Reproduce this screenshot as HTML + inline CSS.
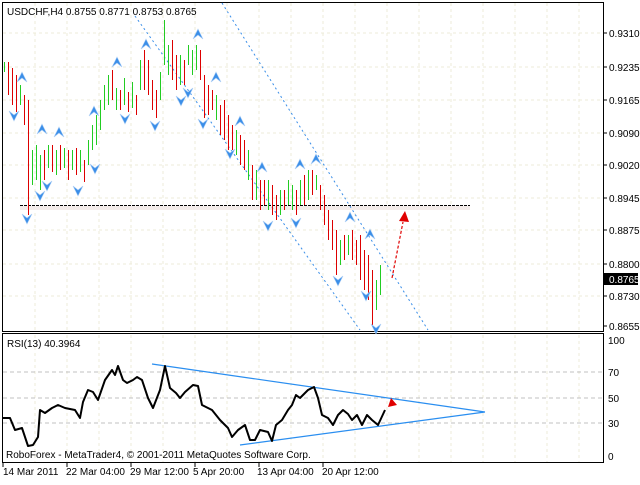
<!DOCTYPE html>
<html><head><meta charset="utf-8"><style>
html,body{margin:0;padding:0;background:#fff;}
svg text{font-family:"Liberation Sans",sans-serif;font-size:10px;fill:#000;}
</style></head><body>
<svg width="640" height="480" viewBox="0 0 640 480" xmlns="http://www.w3.org/2000/svg">
<rect width="640" height="480" fill="#fff"/>
<g stroke="#ecebd8" stroke-width="1" stroke-dasharray="3,3" shape-rendering="crispEdges">
<path d="M35 3V330M67 3V330M99 3V330M131 3V330M163 3V330M195 3V330M227 3V330M259 3V330M291 3V330M323 3V330M355 3V330M387 3V330M419 3V330M451 3V330M483 3V330M515 3V330M547 3V330M579 3V330"/>
<path d="M3 33H603M3 67H603M3 100H603M3 133H603M3 165H603M3 198H603M3 230H603M3 264H603M3 296H603"/>
<path d="M35 335V462M67 335V462M99 335V462M131 335V462M163 335V462M195 335V462M227 335V462M259 335V462M291 335V462M323 335V462M355 335V462M387 335V462M419 335V462M451 335V462M483 335V462M515 335V462M547 335V462M579 335V462"/>
</g>
<g stroke="#c0c0c0" stroke-dasharray="4,3" shape-rendering="crispEdges"><path d="M3 372H603M3 398H603M3 423H603"/></g>
<rect x="2.5" y="2.5" width="601" height="329" fill="none" stroke="#000" shape-rendering="crispEdges"/>
<rect x="2.5" y="333.5" width="601" height="129" fill="none" stroke="#000" shape-rendering="crispEdges"/>
<rect x="20" y="206" width="450" height="4" fill="#f3ecea"/>
<path d="M20 205.5H470" stroke="#000" stroke-dasharray="3,1" shape-rendering="crispEdges"/>
<g stroke="#3a8ee8" stroke-dasharray="2,3" fill="none"><path d="M222 3L428 330M135 16L360 330"/></g>
<g stroke-width="1" transform="translate(0.5 0)">
<g stroke="#dd0000">
<path d="M8 62V95M12 68V105M16 75V112M24 95V125M28 100V215M44 150V180M52 145V172M60 145V170M68 150V180M76 148V175M84 160V182M112 70V100M120 90V110M128 92V112M136 95V115M144 50V90M148 60V95M152 80V110M156 90V118M172 40V80M176 55V90M184 60V85M200 50V80M204 75V118M208 85V115M212 90V110M220 105V135M224 100V140M228 115V150M232 125V150M240 135V165M244 140V170M252 165V200M260 180V210M264 180V205M272 185V215M276 195V220M284 190V210M296 190V215M304 175V205M312 170V195M320 185V210M324 195V225M328 210V240M332 220V250M336 230V275M344 235V260M352 230V260M356 240V265M360 235V280M364 250V290M368 255V300M372 270V325"/>
</g>
<g stroke="#22cc22">
<path d="M4 62V72M20 85V105M32 150V185M36 145V180M40 155V190M48 145V168M56 150V175M64 148V168M72 150V170M80 150V172M88 140V165M92 125V150M96 115V145M100 100V130M104 85V110M108 75V105M116 88V110M124 78V105M132 82V108M140 60V90M160 72V100M164 20V65M168 45V75M180 55V85M188 45V65M192 50V75M196 45V70M216 95V120M236 130V155M248 150V180M256 170V200M268 180V210M280 190V215M288 180V205M292 185V210M300 180V205M308 170V200M316 175V190M340 240V265M348 235V255M376 280V310M380 265V295"/>
</g>
</g>
<g fill="#3a8ee8" stroke="#a8ccf5" stroke-width="0.6">
<path d="M22 78l-5 4 5-10 5 10z"/>
<path d="M42 130l-5 4 5-10 5 10z"/><path d="M59 133l-5 4 5-10 5 10z"/>
<path d="M94 112l-5 4 5-10 5 10z"/><path d="M117 63l-5 4 5-10 5 10z"/>
<path d="M146 45l-5 4 5-10 5 10z"/><path d="M198 35l-5 4 5-10 5 10z"/>
<path d="M216 78l-5 4 5-10 5 10z"/><path d="M240 122l-5 4 5-10 5 10z"/>
<path d="M262 168l-5 4 5-10 5 10z"/><path d="M300 165l-5 4 5-10 5 10z"/>
<path d="M316 160l-5 4 5-10 5 10z"/><path d="M350 218l-5 4 5-10 5 10z"/>
<path d="M370 235l-5 4 5-10 5 10z"/>
<path d="M14 115l5-4-5 10-5-10z"/><path d="M27 218l5-4-5 10-5-10z"/>
<path d="M40 195l5-4-5 10-5-10z"/><path d="M47 185l5-4-5 10-5-10z"/>
<path d="M78 190l5-4-5 10-5-10z"/><path d="M95 168l5-4-5 10-5-10z"/>
<path d="M125 118l5-4-5 10-5-10z"/><path d="M155 125l5-4-5 10-5-10z"/>
<path d="M181 100l5-4-5 10-5-10z"/><path d="M188 92l5-4-5 10-5-10z"/>
<path d="M203 123l5-4-5 10-5-10z"/><path d="M230 153l5-4-5 10-5-10z"/>
<path d="M268 225l5-4-5 10-5-10z"/><path d="M296 222l5-4-5 10-5-10z"/>
<path d="M338 280l5-4-5 10-5-10z"/><path d="M366 295l5-4-5 10-5-10z"/>
<path d="M376 328l5-4-5 10-5-10z"/>
</g>
<path d="M392 278L403 222" stroke="#e00000" stroke-width="1.2" stroke-dasharray="3,2"/>
<path d="M405 211l-6 10 10 1z" fill="#e00000"/>
<g shape-rendering="crispEdges"><path d="M603 33h4M603 67h4M603 100h4M603 133h4M603 165h4M603 198h4M603 230h4M603 264h4M603 296h4M603 326h4" stroke="#000"/></g>
<text x="609" y="37">0.9310</text><text x="609" y="71">0.9235</text><text x="609" y="104">0.9165</text>
<text x="609" y="137">0.9090</text><text x="609" y="169">0.9020</text><text x="609" y="202">0.8945</text>
<text x="609" y="234">0.8875</text><text x="609" y="268">0.8800</text><text x="609" y="300">0.8730</text>
<text x="609" y="330">0.8655</text>
<rect x="604" y="273" width="34" height="12" fill="#000"/>
<text x="609" y="283" style="fill:#fff">0.8765</text>
<text x="7" y="15">USDCHF,H4  0.8755 0.8771 0.8753 0.8765</text>
<text x="7" y="347">RSI(13) 40.3964</text>
<text x="608" y="344">100</text><text x="608" y="376">70</text><text x="608" y="402">50</text><text x="608" y="427">30</text><text x="608" y="460">0</text>
<path d="M152 364L485 412M240 445L485 412" stroke="#2a8ef0" stroke-width="1.2" fill="none"/>
<polyline fill="none" stroke="#000" stroke-width="2" stroke-linejoin="round" points="3,418 10,418 15,430 22,428 28,446 33,445 38,437 40,410 45,413 52,408 58,405 65,408 75,410 80,418 83,402 88,390 93,392 98,400 105,380 112,370 115,375 118,366 123,380 127,383 133,380 137,377 142,380 148,398 153,408 160,390 165,366 170,388 176,393 180,398 185,392 193,385 198,386 202,405 212,410 220,420 228,428 232,437 238,430 245,425 250,440 255,440 260,430 268,432 272,441 276,425 282,420 288,410 292,405 296,395 300,398 308,390 314,387 318,398 322,415 328,418 333,425 338,415 343,410 348,414 352,420 357,415 362,425 367,415 372,420 378,425 385,410"/>
<path d="M388 407l3-9 6 7z" fill="#e00000"/>
<text x="6" y="458">RoboForex - MetaTrader4, © 2001-2011 MetaQuotes Software Corp.</text>
<path d="M3 463v4M67 463v4M131 463v4M195 463v4M259 463v4M323 463v4" stroke="#000" shape-rendering="crispEdges"/>
<text x="3" y="475">14 Mar 2011</text><text x="66" y="475">22 Mar 04:00</text><text x="130" y="475">29 Mar 12:00</text>
<text x="193" y="475">5 Apr 20:00</text><text x="257" y="475">13 Apr 04:00</text><text x="322" y="475">20 Apr 12:00</text>
</svg>
</body></html>
